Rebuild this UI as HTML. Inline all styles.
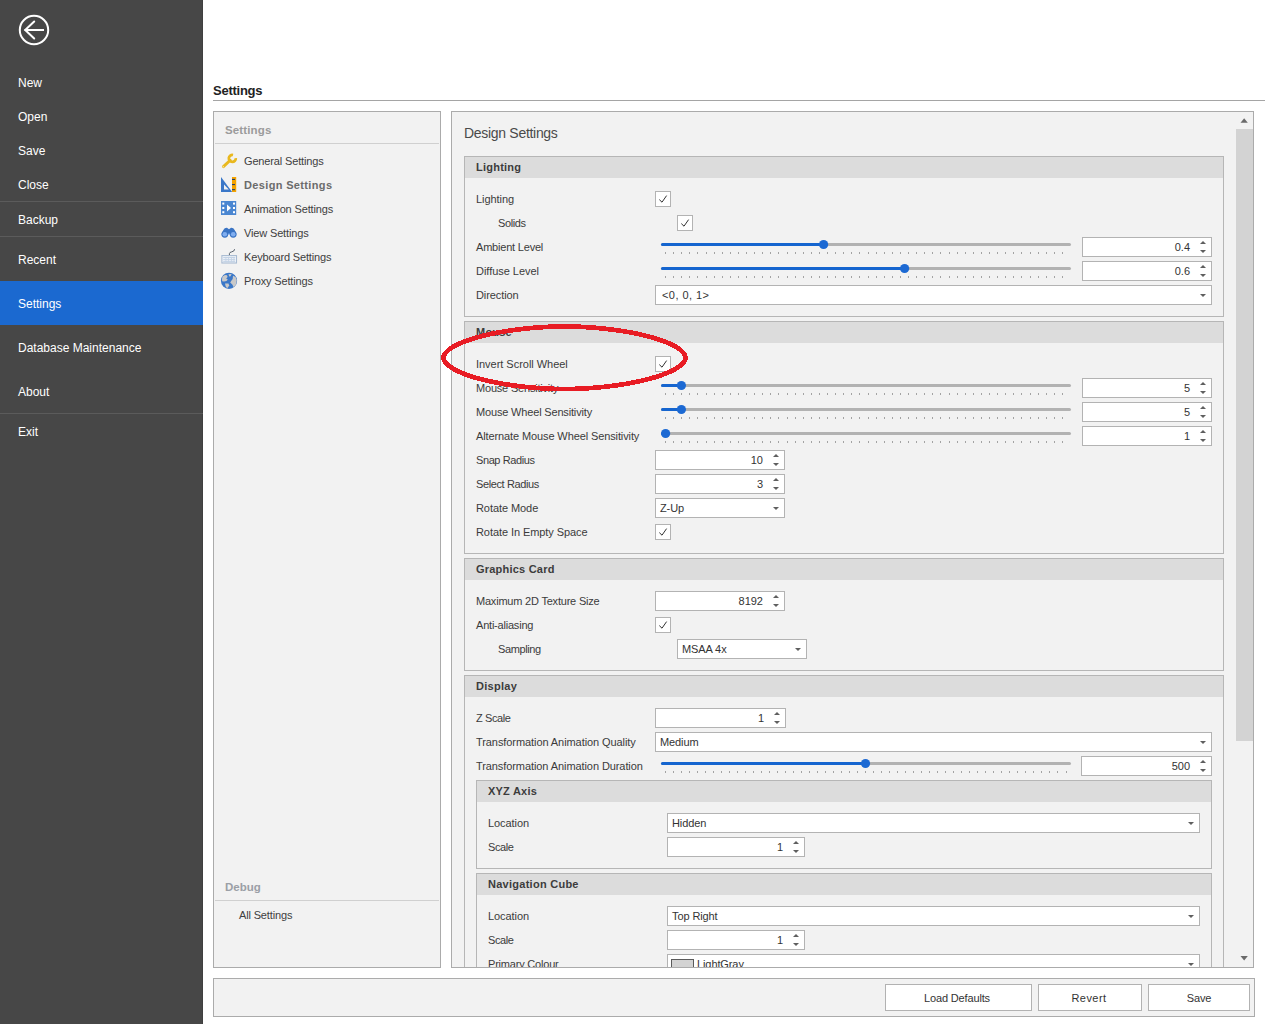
<!DOCTYPE html>
<html><head><meta charset="utf-8"><title>Settings</title>
<style>
html,body{margin:0;padding:0;width:1265px;height:1024px;overflow:hidden;background:#ffffff;}
body{position:relative;font-family:"Liberation Sans", sans-serif;}
.r{position:absolute;box-sizing:border-box;}
.t{position:absolute;white-space:nowrap;line-height:16px;font-family:"Liberation Sans", sans-serif;}
svg{display:block;}
</style></head><body>
<div class="r" style="left:0px;top:0px;width:203px;height:1024px;background:#474747;"></div>
<div class="r" style="left:202px;top:0px;width:1px;height:1024px;background:#3f3f3f;"></div>
<svg class="r" style="left:0;top:0" width="60" height="60" viewBox="0 0 60 60">
<circle cx="34" cy="30" r="14.2" fill="none" stroke="#fff" stroke-width="2"/>
<path d="M24.6 30 H44" stroke="#fff" stroke-width="2" fill="none"/>
<path d="M34.2 21.5 L25.2 30 L34.2 38.5" stroke="#fff" stroke-width="2" fill="none" stroke-linecap="round"/>
</svg>
<div class="r" style="left:0px;top:201px;width:203px;height:1px;background:#5b5b5b;"></div>
<div class="r" style="left:0px;top:236px;width:203px;height:1px;background:#5b5b5b;"></div>
<div class="r" style="left:0px;top:413px;width:203px;height:1px;background:#5b5b5b;"></div>
<div class="r" style="left:0px;top:281px;width:203px;height:44px;background:#1b69d0;"></div>
<div class="t" style="left:18px;top:75px;font-size:12px;font-weight:400;color:#ffffff;">New</div>
<div class="t" style="left:18px;top:109px;font-size:12px;font-weight:400;color:#ffffff;">Open</div>
<div class="t" style="left:18px;top:143px;font-size:12px;font-weight:400;color:#ffffff;">Save</div>
<div class="t" style="left:18px;top:177px;font-size:12px;font-weight:400;color:#ffffff;">Close</div>
<div class="t" style="left:18px;top:212px;font-size:12px;font-weight:400;color:#ffffff;">Backup</div>
<div class="t" style="left:18px;top:252px;font-size:12px;font-weight:400;color:#ffffff;">Recent</div>
<div class="t" style="left:18px;top:296px;font-size:12px;font-weight:400;color:#ffffff;">Settings</div>
<div class="t" style="left:18px;top:340px;font-size:12px;font-weight:400;color:#ffffff;">Database Maintenance</div>
<div class="t" style="left:18px;top:384px;font-size:12px;font-weight:400;color:#ffffff;">About</div>
<div class="t" style="left:18px;top:424px;font-size:12px;font-weight:400;color:#ffffff;">Exit</div>
<div class="t" style="left:213px;top:83px;font-size:13px;font-weight:700;color:#222222;letter-spacing:-0.25px;">Settings</div>
<div class="r" style="left:213px;top:100px;width:1052px;height:1px;background:#a5a5a5;"></div>
<div class="r" style="left:213px;top:111px;width:228px;height:857px;background:#f2f2f2;box-shadow:inset 0 0 0 1px #ababab;"></div>
<div class="t" style="left:225px;top:122px;font-size:11.5px;font-weight:700;color:#9b9b9b;letter-spacing:0.13px;">Settings</div>
<div class="r" style="left:215px;top:143px;width:224px;height:1px;background:#d0d0d0;"></div>
<div class="t" style="left:244px;top:153px;font-size:11px;font-weight:400;color:#404040;letter-spacing:-0.15px;">General Settings</div>
<div class="t" style="left:244px;top:177px;font-size:11px;font-weight:700;color:#6b6b6b;letter-spacing:0.35px;">Design Settings</div>
<div class="t" style="left:244px;top:201px;font-size:11px;font-weight:400;color:#404040;letter-spacing:-0.15px;">Animation Settings</div>
<div class="t" style="left:244px;top:225px;font-size:11px;font-weight:400;color:#404040;letter-spacing:-0.15px;">View Settings</div>
<div class="t" style="left:244px;top:249px;font-size:11px;font-weight:400;color:#404040;letter-spacing:-0.15px;">Keyboard Settings</div>
<div class="t" style="left:244px;top:273px;font-size:11px;font-weight:400;color:#404040;letter-spacing:-0.15px;">Proxy Settings</div>
<svg class="r" style="left:219px;top:150px" width="22" height="142" viewBox="219 150 22 142">
<!-- wrench -->
<path d="M235.79 158.09 A3.5 3.5 0 1 1 233.03 154.98" stroke="#e9b81e" stroke-width="2.7" fill="none"/>
<line x1="230.2" y1="160.2" x2="223.4" y2="166.6" stroke="#e9b81e" stroke-width="2.9" stroke-linecap="round"/>
<circle cx="223.3" cy="166.7" r="0.75" fill="#f6e2a0"/>
<!-- design: triangle + ruler -->
<path d="M221 177 L232.2 192 L221 192 Z" fill="#3a77c8"/>
<path d="M224 184.6 L228.8 189.6 L224 189.6 Z" fill="#f2f2f2"/>
<rect x="232" y="177" width="4.2" height="15" fill="#f5a300"/>
<g fill="#23406b"><rect x="232" y="178.9" width="3" height="1.1"/><rect x="232" y="184" width="3" height="1.1"/><rect x="232" y="189.1" width="3" height="1.1"/></g>
<!-- animation -->
<rect x="221" y="201" width="15.2" height="14" fill="#4a86d1"/>
<g fill="#fff"><rect x="222.3" y="202.6" width="2" height="2"/><rect x="222.3" y="207" width="2" height="2"/><rect x="222.3" y="211.2" width="2" height="2"/>
<rect x="233" y="202.6" width="2" height="2"/><rect x="233" y="207" width="2" height="2"/><rect x="233" y="211.2" width="2" height="2"/>
<path d="M227 204.5 L231 208 L227 211.5 Z"/></g>
<!-- binoculars -->
<path d="M223.2 230.2 Q224.6 227.6 227 227.8 L229 229.2 L231 227.8 Q233.4 227.6 234.8 230.2 L236.4 234 L221.6 234 Z" fill="#3a74c4"/>
<circle cx="224.8" cy="234.3" r="3.4" fill="#3a74c4"/><circle cx="233.2" cy="234.3" r="3.4" fill="#3a74c4"/>
<circle cx="224.8" cy="234.3" r="2.3" fill="#80aef0"/><circle cx="233.2" cy="234.3" r="2.3" fill="#80aef0"/>
<rect x="228" y="233.6" width="2" height="1.1" fill="#80aef0"/>
<!-- keyboard -->
<path d="M229.4 255 L229.4 253.6 Q229.6 252.2 231.6 251.9 Q234.4 251.5 234.6 249.2" stroke="#56606c" stroke-width="1" fill="none"/>
<rect x="221.9" y="255.6" width="14.6" height="7.4" fill="#f4f7fb" stroke="#a8bbd2" stroke-width="1.1"/>
<g fill="#c3d2e5"><rect x="223.2" y="257" width="12" height="1.2"/><rect x="223.2" y="259.1" width="12" height="1.2"/><rect x="223.2" y="261.1" width="12" height="1"/>
<rect x="225.5" y="256.8" width="0.8" height="5.4"/><rect x="228.2" y="256.8" width="0.8" height="5.4"/><rect x="231" y="256.8" width="0.8" height="5.4"/><rect x="233.6" y="256.8" width="0.8" height="5.4"/></g>
<!-- globe -->
<circle cx="229" cy="280.8" r="8.1" fill="#3b78c8"/>
<g fill="#c9c9c9">
<path d="M222 279 L222.5 276.5 L225 275 L227 275.3 L227.6 277 L226.2 278.4 L227.8 279.5 L226.5 281 L224 281.6 L222.2 281.2 Z"/>
<path d="M228.5 274.2 L231.6 273.9 L230.6 276.3 L229.3 276.6 Z"/>
<path d="M225 283.4 L228.5 283.4 L229.2 285.4 L227.6 288 L226 287.2 L225.4 285.2 Z"/>
<path d="M233 275.8 L235.6 277 L236.8 280 L236.2 284 L233.8 287.6 L232.3 284.6 L230.2 282.6 L231.5 280.4 L232.7 279 Z"/>
</g>
</svg>
<div class="t" style="left:225px;top:879px;font-size:11.5px;font-weight:700;color:#9b9fa6;letter-spacing:0px;">Debug</div>
<div class="r" style="left:215px;top:900px;width:224px;height:1px;background:#d0d0d0;"></div>
<div class="t" style="left:239px;top:907px;font-size:11px;font-weight:400;color:#404040;letter-spacing:-0.15px;">All Settings</div>
<div class="r" style="left:213px;top:978px;width:1042px;height:39px;background:#f2f2f2;box-shadow:inset 0 0 0 1px #ababab;"></div>
<div class="r" style="left:885px;top:984px;width:147px;height:27px;background:#ffffff;box-shadow:inset 0 0 0 1px #b2b2b2;"></div>
<div class="t" style="left:883.5px;width:147.0px;top:990px;font-size:11px;color:#333333;letter-spacing:-0.15px;text-align:center">Load Defaults</div>
<div class="r" style="left:1038px;top:984px;width:104px;height:27px;background:#ffffff;box-shadow:inset 0 0 0 1px #b2b2b2;"></div>
<div class="t" style="left:1037px;width:104px;top:990px;font-size:11px;color:#333333;letter-spacing:0.45px;text-align:center">Revert</div>
<div class="r" style="left:1148px;top:984px;width:102px;height:27px;background:#ffffff;box-shadow:inset 0 0 0 1px #b2b2b2;"></div>
<div class="t" style="left:1148px;width:102px;top:990px;font-size:11px;color:#333333;letter-spacing:-0.15px;text-align:center">Save</div>
<div class="r" style="left:451px;top:111px;width:803px;height:857px;background:#f2f2f2;box-shadow:inset 0 0 0 1px #ababab;"></div>
<div class="r" style="left:0;top:0;width:1265px;height:1024px;clip-path:inset(112px 12px 57px 452px)">
<div class="t" style="left:464px;top:125px;font-size:14px;font-weight:400;color:#4a4a4a;letter-spacing:-0.3px;">Design Settings</div>
<div class="r" style="left:464px;top:156px;width:760px;height:161px;background:#f2f2f2;box-shadow:inset 0 0 0 1px #b6b6b6;"></div>
<div class="r" style="left:465px;top:157px;width:758px;height:21px;background:#dcdcdc;"></div>
<div class="t" style="left:476px;top:159px;font-size:11px;font-weight:700;color:#3c3c3c;letter-spacing:0.229px;">Lighting</div>
<div class="t" style="left:476px;top:191px;font-size:11px;font-weight:400;color:#3b3b3b;letter-spacing:-0.057px;">Lighting</div>
<div class="r" style="left:655px;top:191px;width:16px;height:16px;background:#ffffff;box-shadow:inset 0 0 0 1px #b3b3b3;"></div>
<div class="t" style="left:498px;top:215px;font-size:11px;font-weight:400;color:#3b3b3b;letter-spacing:-0.4px;">Solids</div>
<div class="r" style="left:677px;top:215px;width:16px;height:16px;background:#ffffff;box-shadow:inset 0 0 0 1px #b3b3b3;"></div>
<div class="t" style="left:476px;top:239px;font-size:11px;font-weight:400;color:#3b3b3b;letter-spacing:-0.2px;">Ambient Level</div>
<div class="r" style="left:1082px;top:237px;width:130px;height:20px;background:#ffffff;box-shadow:inset 0 0 0 1px #b3b3b3;"></div>
<div class="t" style="right:75px;top:239px;font-size:11px;font-weight:400;color:#333333;text-align:right">0.4</div>
<div class="t" style="left:476px;top:263px;font-size:11px;font-weight:400;color:#3b3b3b;letter-spacing:-0.033px;">Diffuse Level</div>
<div class="r" style="left:1082px;top:261px;width:130px;height:20px;background:#ffffff;box-shadow:inset 0 0 0 1px #b3b3b3;"></div>
<div class="t" style="right:75px;top:263px;font-size:11px;font-weight:400;color:#333333;text-align:right">0.6</div>
<div class="t" style="left:476px;top:287px;font-size:11px;font-weight:400;color:#3b3b3b;letter-spacing:-0.088px;">Direction</div>
<div class="r" style="left:655px;top:285px;width:557px;height:20px;background:#ffffff;box-shadow:inset 0 0 0 1px #b3b3b3;"></div>
<div class="t" style="left:662px;top:287px;font-size:11px;font-weight:400;color:#333333;letter-spacing:0.45px;">&lt;0, 0, 1&gt;</div>
<div class="r" style="left:464px;top:321px;width:760px;height:233px;background:#f2f2f2;box-shadow:inset 0 0 0 1px #b6b6b6;"></div>
<div class="r" style="left:465px;top:322px;width:758px;height:21px;background:#dcdcdc;"></div>
<div class="t" style="left:476px;top:324px;font-size:11px;font-weight:700;color:#3c3c3c;letter-spacing:0.22px;">Mouse</div>
<div class="t" style="left:476px;top:356px;font-size:11px;font-weight:400;color:#3b3b3b;letter-spacing:-0.028px;">Invert Scroll Wheel</div>
<div class="r" style="left:655px;top:356px;width:16px;height:16px;background:#ffffff;box-shadow:inset 0 0 0 1px #b3b3b3;"></div>
<div class="t" style="left:476px;top:380px;font-size:11px;font-weight:400;color:#3b3b3b;letter-spacing:-0.194px;">Mouse Sensitivity</div>
<div class="r" style="left:1082px;top:378px;width:130px;height:20px;background:#ffffff;box-shadow:inset 0 0 0 1px #b3b3b3;"></div>
<div class="t" style="right:75px;top:380px;font-size:11px;font-weight:400;color:#333333;text-align:right">5</div>
<div class="t" style="left:476px;top:404px;font-size:11px;font-weight:400;color:#3b3b3b;letter-spacing:-0.168px;">Mouse Wheel Sensitivity</div>
<div class="r" style="left:1082px;top:402px;width:130px;height:20px;background:#ffffff;box-shadow:inset 0 0 0 1px #b3b3b3;"></div>
<div class="t" style="right:75px;top:404px;font-size:11px;font-weight:400;color:#333333;text-align:right">5</div>
<div class="t" style="left:476px;top:428px;font-size:11px;font-weight:400;color:#3b3b3b;letter-spacing:-0.112px;">Alternate Mouse Wheel Sensitivity</div>
<div class="r" style="left:1082px;top:426px;width:130px;height:20px;background:#ffffff;box-shadow:inset 0 0 0 1px #b3b3b3;"></div>
<div class="t" style="right:75px;top:428px;font-size:11px;font-weight:400;color:#333333;text-align:right">1</div>
<div class="t" style="left:476px;top:452px;font-size:11px;font-weight:400;color:#3b3b3b;letter-spacing:-0.4px;">Snap Radius</div>
<div class="r" style="left:655px;top:450px;width:130px;height:20px;background:#ffffff;box-shadow:inset 0 0 0 1px #b3b3b3;"></div>
<div class="t" style="right:502px;top:452px;font-size:11px;font-weight:400;color:#333333;text-align:right">10</div>
<div class="t" style="left:476px;top:476px;font-size:11px;font-weight:400;color:#3b3b3b;letter-spacing:-0.383px;">Select Radius</div>
<div class="r" style="left:655px;top:474px;width:130px;height:20px;background:#ffffff;box-shadow:inset 0 0 0 1px #b3b3b3;"></div>
<div class="t" style="right:502px;top:476px;font-size:11px;font-weight:400;color:#333333;text-align:right">3</div>
<div class="t" style="left:476px;top:500px;font-size:11px;font-weight:400;color:#3b3b3b;letter-spacing:-0.07px;">Rotate Mode</div>
<div class="r" style="left:655px;top:498px;width:130px;height:20px;background:#ffffff;box-shadow:inset 0 0 0 1px #b3b3b3;"></div>
<div class="t" style="left:660px;top:500px;font-size:11px;font-weight:400;color:#333333;letter-spacing:-0.1px;">Z-Up</div>
<div class="t" style="left:476px;top:524px;font-size:11px;font-weight:400;color:#3b3b3b;letter-spacing:-0.075px;">Rotate In Empty Space</div>
<div class="r" style="left:655px;top:524px;width:16px;height:16px;background:#ffffff;box-shadow:inset 0 0 0 1px #b3b3b3;"></div>
<div class="r" style="left:464px;top:558px;width:760px;height:113px;background:#f2f2f2;box-shadow:inset 0 0 0 1px #b6b6b6;"></div>
<div class="r" style="left:465px;top:559px;width:758px;height:21px;background:#dcdcdc;"></div>
<div class="t" style="left:476px;top:561px;font-size:11px;font-weight:700;color:#3c3c3c;letter-spacing:0.217px;">Graphics Card</div>
<div class="t" style="left:476px;top:593px;font-size:11px;font-weight:400;color:#3b3b3b;letter-spacing:-0.205px;">Maximum 2D Texture Size</div>
<div class="r" style="left:655px;top:591px;width:130px;height:20px;background:#ffffff;box-shadow:inset 0 0 0 1px #b3b3b3;"></div>
<div class="t" style="right:502px;top:593px;font-size:11px;font-weight:400;color:#333333;text-align:right">8192</div>
<div class="t" style="left:476px;top:617px;font-size:11px;font-weight:400;color:#3b3b3b;letter-spacing:-0.208px;">Anti-aliasing</div>
<div class="r" style="left:655px;top:617px;width:16px;height:16px;background:#ffffff;box-shadow:inset 0 0 0 1px #b3b3b3;"></div>
<div class="t" style="left:498px;top:641px;font-size:11px;font-weight:400;color:#3b3b3b;letter-spacing:-0.4px;">Sampling</div>
<div class="r" style="left:677px;top:639px;width:130px;height:20px;background:#ffffff;box-shadow:inset 0 0 0 1px #b3b3b3;"></div>
<div class="t" style="left:682px;top:641px;font-size:11px;font-weight:400;color:#333333;letter-spacing:-0.1px;">MSAA 4x</div>
<div class="r" style="left:464px;top:675px;width:760px;height:426px;background:#f2f2f2;box-shadow:inset 0 0 0 1px #b6b6b6;"></div>
<div class="r" style="left:465px;top:676px;width:758px;height:21px;background:#dcdcdc;"></div>
<div class="t" style="left:476px;top:678px;font-size:11px;font-weight:700;color:#3c3c3c;letter-spacing:0.283px;">Display</div>
<div class="t" style="left:476px;top:710px;font-size:11px;font-weight:400;color:#3b3b3b;letter-spacing:-0.4px;">Z Scale</div>
<div class="r" style="left:655px;top:708px;width:131px;height:20px;background:#ffffff;box-shadow:inset 0 0 0 1px #b3b3b3;"></div>
<div class="t" style="right:501px;top:710px;font-size:11px;font-weight:400;color:#333333;text-align:right">1</div>
<div class="t" style="left:476px;top:734px;font-size:11px;font-weight:400;color:#3b3b3b;letter-spacing:-0.077px;">Transformation Animation Quality</div>
<div class="r" style="left:655px;top:732px;width:557px;height:20px;background:#ffffff;box-shadow:inset 0 0 0 1px #b3b3b3;"></div>
<div class="t" style="left:660px;top:734px;font-size:11px;font-weight:400;color:#333333;letter-spacing:-0.1px;">Medium</div>
<div class="t" style="left:476px;top:758px;font-size:11px;font-weight:400;color:#3b3b3b;letter-spacing:-0.084px;">Transformation Animation Duration</div>
<div class="r" style="left:1081px;top:756px;width:131px;height:20px;background:#ffffff;box-shadow:inset 0 0 0 1px #b3b3b3;"></div>
<div class="t" style="right:75px;top:758px;font-size:11px;font-weight:400;color:#333333;text-align:right">500</div>
<div class="r" style="left:476px;top:780px;width:736px;height:89px;background:#f2f2f2;box-shadow:inset 0 0 0 1px #b6b6b6;"></div>
<div class="r" style="left:477px;top:781px;width:734px;height:21px;background:#dcdcdc;"></div>
<div class="t" style="left:488px;top:783px;font-size:11px;font-weight:700;color:#3c3c3c;letter-spacing:0.22px;">XYZ Axis</div>
<div class="t" style="left:488px;top:815px;font-size:11px;font-weight:400;color:#3b3b3b;letter-spacing:-0.071px;">Location</div>
<div class="r" style="left:667px;top:813px;width:533px;height:20px;background:#ffffff;box-shadow:inset 0 0 0 1px #b3b3b3;"></div>
<div class="t" style="left:672px;top:815px;font-size:11px;font-weight:400;color:#333333;letter-spacing:-0.1px;">Hidden</div>
<div class="t" style="left:488px;top:839px;font-size:11px;font-weight:400;color:#3b3b3b;letter-spacing:-0.4px;">Scale</div>
<div class="r" style="left:667px;top:837px;width:138px;height:20px;background:#ffffff;box-shadow:inset 0 0 0 1px #b3b3b3;"></div>
<div class="t" style="right:482px;top:839px;font-size:11px;font-weight:400;color:#333333;text-align:right">1</div>
<div class="r" style="left:476px;top:873px;width:736px;height:228px;background:#f2f2f2;box-shadow:inset 0 0 0 1px #b6b6b6;"></div>
<div class="r" style="left:477px;top:874px;width:734px;height:21px;background:#dcdcdc;"></div>
<div class="t" style="left:488px;top:876px;font-size:11px;font-weight:700;color:#3c3c3c;letter-spacing:0.264px;">Navigation Cube</div>
<div class="t" style="left:488px;top:908px;font-size:11px;font-weight:400;color:#3b3b3b;letter-spacing:-0.071px;">Location</div>
<div class="r" style="left:667px;top:906px;width:533px;height:20px;background:#ffffff;box-shadow:inset 0 0 0 1px #b3b3b3;"></div>
<div class="t" style="left:672px;top:908px;font-size:11px;font-weight:400;color:#333333;letter-spacing:-0.1px;">Top Right</div>
<div class="t" style="left:488px;top:932px;font-size:11px;font-weight:400;color:#3b3b3b;letter-spacing:-0.4px;">Scale</div>
<div class="r" style="left:667px;top:930px;width:138px;height:20px;background:#ffffff;box-shadow:inset 0 0 0 1px #b3b3b3;"></div>
<div class="t" style="right:482px;top:932px;font-size:11px;font-weight:400;color:#333333;text-align:right">1</div>
<div class="t" style="left:488px;top:956px;font-size:11px;font-weight:400;color:#3b3b3b;letter-spacing:-0.2px;">Primary Colour</div>
<div class="r" style="left:667px;top:954px;width:533px;height:20px;background:#ffffff;box-shadow:inset 0 0 0 1px #b3b3b3;"></div>
<div class="r" style="left:671px;top:959px;width:23px;height:13px;background:#d3d3d3;box-shadow:inset 0 0 0 1px #5a5a5a;"></div>
<div class="t" style="left:697px;top:956px;font-size:11px;font-weight:400;color:#333333;letter-spacing:-0.1px;">LightGray</div>
<svg class="r" style="left:0;top:0" width="1265" height="1024"><path d="M659.3 199.6 L662 202.2 L666.6 195.6" stroke="#333333" stroke-width="1" fill="none"/><path d="M681.3 223.6 L684 226.2 L688.6 219.6" stroke="#333333" stroke-width="1" fill="none"/><rect x="665" y="252" width="1" height="2" fill="#a3a3a3"/><rect x="673" y="252" width="1" height="2" fill="#a3a3a3"/><rect x="681" y="252" width="1" height="2" fill="#a3a3a3"/><rect x="689" y="252" width="1" height="2" fill="#a3a3a3"/><rect x="697" y="252" width="1" height="2" fill="#a3a3a3"/><rect x="706" y="252" width="1" height="2" fill="#a3a3a3"/><rect x="714" y="252" width="1" height="2" fill="#a3a3a3"/><rect x="722" y="252" width="1" height="2" fill="#a3a3a3"/><rect x="730" y="252" width="1" height="2" fill="#a3a3a3"/><rect x="738" y="252" width="1" height="2" fill="#a3a3a3"/><rect x="746" y="252" width="1" height="2" fill="#a3a3a3"/><rect x="754" y="252" width="1" height="2" fill="#a3a3a3"/><rect x="762" y="252" width="1" height="2" fill="#a3a3a3"/><rect x="770" y="252" width="1" height="2" fill="#a3a3a3"/><rect x="778" y="252" width="1" height="2" fill="#a3a3a3"/><rect x="787" y="252" width="1" height="2" fill="#a3a3a3"/><rect x="795" y="252" width="1" height="2" fill="#a3a3a3"/><rect x="803" y="252" width="1" height="2" fill="#a3a3a3"/><rect x="811" y="252" width="1" height="2" fill="#a3a3a3"/><rect x="819" y="252" width="1" height="2" fill="#a3a3a3"/><rect x="827" y="252" width="1" height="2" fill="#a3a3a3"/><rect x="835" y="252" width="1" height="2" fill="#a3a3a3"/><rect x="843" y="252" width="1" height="2" fill="#a3a3a3"/><rect x="851" y="252" width="1" height="2" fill="#a3a3a3"/><rect x="859" y="252" width="1" height="2" fill="#a3a3a3"/><rect x="868" y="252" width="1" height="2" fill="#a3a3a3"/><rect x="876" y="252" width="1" height="2" fill="#a3a3a3"/><rect x="884" y="252" width="1" height="2" fill="#a3a3a3"/><rect x="892" y="252" width="1" height="2" fill="#a3a3a3"/><rect x="900" y="252" width="1" height="2" fill="#a3a3a3"/><rect x="908" y="252" width="1" height="2" fill="#a3a3a3"/><rect x="916" y="252" width="1" height="2" fill="#a3a3a3"/><rect x="924" y="252" width="1" height="2" fill="#a3a3a3"/><rect x="932" y="252" width="1" height="2" fill="#a3a3a3"/><rect x="940" y="252" width="1" height="2" fill="#a3a3a3"/><rect x="949" y="252" width="1" height="2" fill="#a3a3a3"/><rect x="957" y="252" width="1" height="2" fill="#a3a3a3"/><rect x="965" y="252" width="1" height="2" fill="#a3a3a3"/><rect x="973" y="252" width="1" height="2" fill="#a3a3a3"/><rect x="981" y="252" width="1" height="2" fill="#a3a3a3"/><rect x="989" y="252" width="1" height="2" fill="#a3a3a3"/><rect x="997" y="252" width="1" height="2" fill="#a3a3a3"/><rect x="1005" y="252" width="1" height="2" fill="#a3a3a3"/><rect x="1013" y="252" width="1" height="2" fill="#a3a3a3"/><rect x="1021" y="252" width="1" height="2" fill="#a3a3a3"/><rect x="1030" y="252" width="1" height="2" fill="#a3a3a3"/><rect x="1038" y="252" width="1" height="2" fill="#a3a3a3"/><rect x="1046" y="252" width="1" height="2" fill="#a3a3a3"/><rect x="1054" y="252" width="1" height="2" fill="#a3a3a3"/><rect x="1062" y="252" width="1" height="2" fill="#a3a3a3"/><line x1="662.5" y1="244.5" x2="1069.5" y2="244.5" stroke="#b2b2b2" stroke-width="3" stroke-linecap="round"/><line x1="662.5" y1="244.5" x2="823.6" y2="244.5" stroke="#1565cf" stroke-width="3" stroke-linecap="round"/><circle cx="823.6" cy="244.5" r="4.6" fill="#1c69d3"/><path d="M1200 244 L1206 244 L1203 241 Z" fill="#5f5f5f"/><path d="M1200 250 L1206 250 L1203 253 Z" fill="#5f5f5f"/><rect x="665" y="276" width="1" height="2" fill="#a3a3a3"/><rect x="673" y="276" width="1" height="2" fill="#a3a3a3"/><rect x="681" y="276" width="1" height="2" fill="#a3a3a3"/><rect x="689" y="276" width="1" height="2" fill="#a3a3a3"/><rect x="697" y="276" width="1" height="2" fill="#a3a3a3"/><rect x="706" y="276" width="1" height="2" fill="#a3a3a3"/><rect x="714" y="276" width="1" height="2" fill="#a3a3a3"/><rect x="722" y="276" width="1" height="2" fill="#a3a3a3"/><rect x="730" y="276" width="1" height="2" fill="#a3a3a3"/><rect x="738" y="276" width="1" height="2" fill="#a3a3a3"/><rect x="746" y="276" width="1" height="2" fill="#a3a3a3"/><rect x="754" y="276" width="1" height="2" fill="#a3a3a3"/><rect x="762" y="276" width="1" height="2" fill="#a3a3a3"/><rect x="770" y="276" width="1" height="2" fill="#a3a3a3"/><rect x="778" y="276" width="1" height="2" fill="#a3a3a3"/><rect x="787" y="276" width="1" height="2" fill="#a3a3a3"/><rect x="795" y="276" width="1" height="2" fill="#a3a3a3"/><rect x="803" y="276" width="1" height="2" fill="#a3a3a3"/><rect x="811" y="276" width="1" height="2" fill="#a3a3a3"/><rect x="819" y="276" width="1" height="2" fill="#a3a3a3"/><rect x="827" y="276" width="1" height="2" fill="#a3a3a3"/><rect x="835" y="276" width="1" height="2" fill="#a3a3a3"/><rect x="843" y="276" width="1" height="2" fill="#a3a3a3"/><rect x="851" y="276" width="1" height="2" fill="#a3a3a3"/><rect x="859" y="276" width="1" height="2" fill="#a3a3a3"/><rect x="868" y="276" width="1" height="2" fill="#a3a3a3"/><rect x="876" y="276" width="1" height="2" fill="#a3a3a3"/><rect x="884" y="276" width="1" height="2" fill="#a3a3a3"/><rect x="892" y="276" width="1" height="2" fill="#a3a3a3"/><rect x="900" y="276" width="1" height="2" fill="#a3a3a3"/><rect x="908" y="276" width="1" height="2" fill="#a3a3a3"/><rect x="916" y="276" width="1" height="2" fill="#a3a3a3"/><rect x="924" y="276" width="1" height="2" fill="#a3a3a3"/><rect x="932" y="276" width="1" height="2" fill="#a3a3a3"/><rect x="940" y="276" width="1" height="2" fill="#a3a3a3"/><rect x="949" y="276" width="1" height="2" fill="#a3a3a3"/><rect x="957" y="276" width="1" height="2" fill="#a3a3a3"/><rect x="965" y="276" width="1" height="2" fill="#a3a3a3"/><rect x="973" y="276" width="1" height="2" fill="#a3a3a3"/><rect x="981" y="276" width="1" height="2" fill="#a3a3a3"/><rect x="989" y="276" width="1" height="2" fill="#a3a3a3"/><rect x="997" y="276" width="1" height="2" fill="#a3a3a3"/><rect x="1005" y="276" width="1" height="2" fill="#a3a3a3"/><rect x="1013" y="276" width="1" height="2" fill="#a3a3a3"/><rect x="1021" y="276" width="1" height="2" fill="#a3a3a3"/><rect x="1030" y="276" width="1" height="2" fill="#a3a3a3"/><rect x="1038" y="276" width="1" height="2" fill="#a3a3a3"/><rect x="1046" y="276" width="1" height="2" fill="#a3a3a3"/><rect x="1054" y="276" width="1" height="2" fill="#a3a3a3"/><rect x="1062" y="276" width="1" height="2" fill="#a3a3a3"/><line x1="662.5" y1="268.5" x2="1069.5" y2="268.5" stroke="#b2b2b2" stroke-width="3" stroke-linecap="round"/><line x1="662.5" y1="268.5" x2="904.6" y2="268.5" stroke="#1565cf" stroke-width="3" stroke-linecap="round"/><circle cx="904.6" cy="268.5" r="4.6" fill="#1c69d3"/><path d="M1200 268 L1206 268 L1203 265 Z" fill="#5f5f5f"/><path d="M1200 274 L1206 274 L1203 277 Z" fill="#5f5f5f"/><path d="M1200 294 L1206 294 L1203 297 Z" fill="#5f5f5f"/><path d="M659.3 364.6 L662 367.2 L666.6 360.6" stroke="#333333" stroke-width="1" fill="none"/><rect x="665" y="393" width="1" height="2" fill="#a3a3a3"/><rect x="673" y="393" width="1" height="2" fill="#a3a3a3"/><rect x="681" y="393" width="1" height="2" fill="#a3a3a3"/><rect x="689" y="393" width="1" height="2" fill="#a3a3a3"/><rect x="697" y="393" width="1" height="2" fill="#a3a3a3"/><rect x="706" y="393" width="1" height="2" fill="#a3a3a3"/><rect x="714" y="393" width="1" height="2" fill="#a3a3a3"/><rect x="722" y="393" width="1" height="2" fill="#a3a3a3"/><rect x="730" y="393" width="1" height="2" fill="#a3a3a3"/><rect x="738" y="393" width="1" height="2" fill="#a3a3a3"/><rect x="746" y="393" width="1" height="2" fill="#a3a3a3"/><rect x="754" y="393" width="1" height="2" fill="#a3a3a3"/><rect x="762" y="393" width="1" height="2" fill="#a3a3a3"/><rect x="770" y="393" width="1" height="2" fill="#a3a3a3"/><rect x="778" y="393" width="1" height="2" fill="#a3a3a3"/><rect x="787" y="393" width="1" height="2" fill="#a3a3a3"/><rect x="795" y="393" width="1" height="2" fill="#a3a3a3"/><rect x="803" y="393" width="1" height="2" fill="#a3a3a3"/><rect x="811" y="393" width="1" height="2" fill="#a3a3a3"/><rect x="819" y="393" width="1" height="2" fill="#a3a3a3"/><rect x="827" y="393" width="1" height="2" fill="#a3a3a3"/><rect x="835" y="393" width="1" height="2" fill="#a3a3a3"/><rect x="843" y="393" width="1" height="2" fill="#a3a3a3"/><rect x="851" y="393" width="1" height="2" fill="#a3a3a3"/><rect x="859" y="393" width="1" height="2" fill="#a3a3a3"/><rect x="868" y="393" width="1" height="2" fill="#a3a3a3"/><rect x="876" y="393" width="1" height="2" fill="#a3a3a3"/><rect x="884" y="393" width="1" height="2" fill="#a3a3a3"/><rect x="892" y="393" width="1" height="2" fill="#a3a3a3"/><rect x="900" y="393" width="1" height="2" fill="#a3a3a3"/><rect x="908" y="393" width="1" height="2" fill="#a3a3a3"/><rect x="916" y="393" width="1" height="2" fill="#a3a3a3"/><rect x="924" y="393" width="1" height="2" fill="#a3a3a3"/><rect x="932" y="393" width="1" height="2" fill="#a3a3a3"/><rect x="940" y="393" width="1" height="2" fill="#a3a3a3"/><rect x="949" y="393" width="1" height="2" fill="#a3a3a3"/><rect x="957" y="393" width="1" height="2" fill="#a3a3a3"/><rect x="965" y="393" width="1" height="2" fill="#a3a3a3"/><rect x="973" y="393" width="1" height="2" fill="#a3a3a3"/><rect x="981" y="393" width="1" height="2" fill="#a3a3a3"/><rect x="989" y="393" width="1" height="2" fill="#a3a3a3"/><rect x="997" y="393" width="1" height="2" fill="#a3a3a3"/><rect x="1005" y="393" width="1" height="2" fill="#a3a3a3"/><rect x="1013" y="393" width="1" height="2" fill="#a3a3a3"/><rect x="1021" y="393" width="1" height="2" fill="#a3a3a3"/><rect x="1030" y="393" width="1" height="2" fill="#a3a3a3"/><rect x="1038" y="393" width="1" height="2" fill="#a3a3a3"/><rect x="1046" y="393" width="1" height="2" fill="#a3a3a3"/><rect x="1054" y="393" width="1" height="2" fill="#a3a3a3"/><rect x="1062" y="393" width="1" height="2" fill="#a3a3a3"/><line x1="662.5" y1="385.5" x2="1069.5" y2="385.5" stroke="#b2b2b2" stroke-width="3" stroke-linecap="round"/><line x1="662.5" y1="385.5" x2="681.4" y2="385.5" stroke="#1565cf" stroke-width="3" stroke-linecap="round"/><circle cx="681.4" cy="385.5" r="4.6" fill="#1c69d3"/><path d="M1200 385 L1206 385 L1203 382 Z" fill="#5f5f5f"/><path d="M1200 391 L1206 391 L1203 394 Z" fill="#5f5f5f"/><rect x="665" y="417" width="1" height="2" fill="#a3a3a3"/><rect x="673" y="417" width="1" height="2" fill="#a3a3a3"/><rect x="681" y="417" width="1" height="2" fill="#a3a3a3"/><rect x="689" y="417" width="1" height="2" fill="#a3a3a3"/><rect x="697" y="417" width="1" height="2" fill="#a3a3a3"/><rect x="706" y="417" width="1" height="2" fill="#a3a3a3"/><rect x="714" y="417" width="1" height="2" fill="#a3a3a3"/><rect x="722" y="417" width="1" height="2" fill="#a3a3a3"/><rect x="730" y="417" width="1" height="2" fill="#a3a3a3"/><rect x="738" y="417" width="1" height="2" fill="#a3a3a3"/><rect x="746" y="417" width="1" height="2" fill="#a3a3a3"/><rect x="754" y="417" width="1" height="2" fill="#a3a3a3"/><rect x="762" y="417" width="1" height="2" fill="#a3a3a3"/><rect x="770" y="417" width="1" height="2" fill="#a3a3a3"/><rect x="778" y="417" width="1" height="2" fill="#a3a3a3"/><rect x="787" y="417" width="1" height="2" fill="#a3a3a3"/><rect x="795" y="417" width="1" height="2" fill="#a3a3a3"/><rect x="803" y="417" width="1" height="2" fill="#a3a3a3"/><rect x="811" y="417" width="1" height="2" fill="#a3a3a3"/><rect x="819" y="417" width="1" height="2" fill="#a3a3a3"/><rect x="827" y="417" width="1" height="2" fill="#a3a3a3"/><rect x="835" y="417" width="1" height="2" fill="#a3a3a3"/><rect x="843" y="417" width="1" height="2" fill="#a3a3a3"/><rect x="851" y="417" width="1" height="2" fill="#a3a3a3"/><rect x="859" y="417" width="1" height="2" fill="#a3a3a3"/><rect x="868" y="417" width="1" height="2" fill="#a3a3a3"/><rect x="876" y="417" width="1" height="2" fill="#a3a3a3"/><rect x="884" y="417" width="1" height="2" fill="#a3a3a3"/><rect x="892" y="417" width="1" height="2" fill="#a3a3a3"/><rect x="900" y="417" width="1" height="2" fill="#a3a3a3"/><rect x="908" y="417" width="1" height="2" fill="#a3a3a3"/><rect x="916" y="417" width="1" height="2" fill="#a3a3a3"/><rect x="924" y="417" width="1" height="2" fill="#a3a3a3"/><rect x="932" y="417" width="1" height="2" fill="#a3a3a3"/><rect x="940" y="417" width="1" height="2" fill="#a3a3a3"/><rect x="949" y="417" width="1" height="2" fill="#a3a3a3"/><rect x="957" y="417" width="1" height="2" fill="#a3a3a3"/><rect x="965" y="417" width="1" height="2" fill="#a3a3a3"/><rect x="973" y="417" width="1" height="2" fill="#a3a3a3"/><rect x="981" y="417" width="1" height="2" fill="#a3a3a3"/><rect x="989" y="417" width="1" height="2" fill="#a3a3a3"/><rect x="997" y="417" width="1" height="2" fill="#a3a3a3"/><rect x="1005" y="417" width="1" height="2" fill="#a3a3a3"/><rect x="1013" y="417" width="1" height="2" fill="#a3a3a3"/><rect x="1021" y="417" width="1" height="2" fill="#a3a3a3"/><rect x="1030" y="417" width="1" height="2" fill="#a3a3a3"/><rect x="1038" y="417" width="1" height="2" fill="#a3a3a3"/><rect x="1046" y="417" width="1" height="2" fill="#a3a3a3"/><rect x="1054" y="417" width="1" height="2" fill="#a3a3a3"/><rect x="1062" y="417" width="1" height="2" fill="#a3a3a3"/><line x1="662.5" y1="409.5" x2="1069.5" y2="409.5" stroke="#b2b2b2" stroke-width="3" stroke-linecap="round"/><line x1="662.5" y1="409.5" x2="681.4" y2="409.5" stroke="#1565cf" stroke-width="3" stroke-linecap="round"/><circle cx="681.4" cy="409.5" r="4.6" fill="#1c69d3"/><path d="M1200 409 L1206 409 L1203 406 Z" fill="#5f5f5f"/><path d="M1200 415 L1206 415 L1203 418 Z" fill="#5f5f5f"/><rect x="665" y="441" width="1" height="2" fill="#a3a3a3"/><rect x="673" y="441" width="1" height="2" fill="#a3a3a3"/><rect x="681" y="441" width="1" height="2" fill="#a3a3a3"/><rect x="689" y="441" width="1" height="2" fill="#a3a3a3"/><rect x="697" y="441" width="1" height="2" fill="#a3a3a3"/><rect x="706" y="441" width="1" height="2" fill="#a3a3a3"/><rect x="714" y="441" width="1" height="2" fill="#a3a3a3"/><rect x="722" y="441" width="1" height="2" fill="#a3a3a3"/><rect x="730" y="441" width="1" height="2" fill="#a3a3a3"/><rect x="738" y="441" width="1" height="2" fill="#a3a3a3"/><rect x="746" y="441" width="1" height="2" fill="#a3a3a3"/><rect x="754" y="441" width="1" height="2" fill="#a3a3a3"/><rect x="762" y="441" width="1" height="2" fill="#a3a3a3"/><rect x="770" y="441" width="1" height="2" fill="#a3a3a3"/><rect x="778" y="441" width="1" height="2" fill="#a3a3a3"/><rect x="787" y="441" width="1" height="2" fill="#a3a3a3"/><rect x="795" y="441" width="1" height="2" fill="#a3a3a3"/><rect x="803" y="441" width="1" height="2" fill="#a3a3a3"/><rect x="811" y="441" width="1" height="2" fill="#a3a3a3"/><rect x="819" y="441" width="1" height="2" fill="#a3a3a3"/><rect x="827" y="441" width="1" height="2" fill="#a3a3a3"/><rect x="835" y="441" width="1" height="2" fill="#a3a3a3"/><rect x="843" y="441" width="1" height="2" fill="#a3a3a3"/><rect x="851" y="441" width="1" height="2" fill="#a3a3a3"/><rect x="859" y="441" width="1" height="2" fill="#a3a3a3"/><rect x="868" y="441" width="1" height="2" fill="#a3a3a3"/><rect x="876" y="441" width="1" height="2" fill="#a3a3a3"/><rect x="884" y="441" width="1" height="2" fill="#a3a3a3"/><rect x="892" y="441" width="1" height="2" fill="#a3a3a3"/><rect x="900" y="441" width="1" height="2" fill="#a3a3a3"/><rect x="908" y="441" width="1" height="2" fill="#a3a3a3"/><rect x="916" y="441" width="1" height="2" fill="#a3a3a3"/><rect x="924" y="441" width="1" height="2" fill="#a3a3a3"/><rect x="932" y="441" width="1" height="2" fill="#a3a3a3"/><rect x="940" y="441" width="1" height="2" fill="#a3a3a3"/><rect x="949" y="441" width="1" height="2" fill="#a3a3a3"/><rect x="957" y="441" width="1" height="2" fill="#a3a3a3"/><rect x="965" y="441" width="1" height="2" fill="#a3a3a3"/><rect x="973" y="441" width="1" height="2" fill="#a3a3a3"/><rect x="981" y="441" width="1" height="2" fill="#a3a3a3"/><rect x="989" y="441" width="1" height="2" fill="#a3a3a3"/><rect x="997" y="441" width="1" height="2" fill="#a3a3a3"/><rect x="1005" y="441" width="1" height="2" fill="#a3a3a3"/><rect x="1013" y="441" width="1" height="2" fill="#a3a3a3"/><rect x="1021" y="441" width="1" height="2" fill="#a3a3a3"/><rect x="1030" y="441" width="1" height="2" fill="#a3a3a3"/><rect x="1038" y="441" width="1" height="2" fill="#a3a3a3"/><rect x="1046" y="441" width="1" height="2" fill="#a3a3a3"/><rect x="1054" y="441" width="1" height="2" fill="#a3a3a3"/><rect x="1062" y="441" width="1" height="2" fill="#a3a3a3"/><line x1="662.5" y1="433.5" x2="1069.5" y2="433.5" stroke="#b2b2b2" stroke-width="3" stroke-linecap="round"/><line x1="662.5" y1="433.5" x2="665.6" y2="433.5" stroke="#1565cf" stroke-width="3" stroke-linecap="round"/><circle cx="665.6" cy="433.5" r="4.6" fill="#1c69d3"/><path d="M1200 433 L1206 433 L1203 430 Z" fill="#5f5f5f"/><path d="M1200 439 L1206 439 L1203 442 Z" fill="#5f5f5f"/><path d="M773 457 L779 457 L776 454 Z" fill="#5f5f5f"/><path d="M773 463 L779 463 L776 466 Z" fill="#5f5f5f"/><path d="M773 481 L779 481 L776 478 Z" fill="#5f5f5f"/><path d="M773 487 L779 487 L776 490 Z" fill="#5f5f5f"/><path d="M773 507 L779 507 L776 510 Z" fill="#5f5f5f"/><path d="M659.3 532.6 L662 535.2 L666.6 528.6" stroke="#333333" stroke-width="1" fill="none"/><path d="M773 598 L779 598 L776 595 Z" fill="#5f5f5f"/><path d="M773 604 L779 604 L776 607 Z" fill="#5f5f5f"/><path d="M659.3 625.6 L662 628.2 L666.6 621.6" stroke="#333333" stroke-width="1" fill="none"/><path d="M795 648 L801 648 L798 651 Z" fill="#5f5f5f"/><path d="M774 715 L780 715 L777 712 Z" fill="#5f5f5f"/><path d="M774 721 L780 721 L777 724 Z" fill="#5f5f5f"/><path d="M1200 741 L1206 741 L1203 744 Z" fill="#5f5f5f"/><rect x="665" y="771" width="1" height="2" fill="#a3a3a3"/><rect x="673" y="771" width="1" height="2" fill="#a3a3a3"/><rect x="681" y="771" width="1" height="2" fill="#a3a3a3"/><rect x="689" y="771" width="1" height="2" fill="#a3a3a3"/><rect x="697" y="771" width="1" height="2" fill="#a3a3a3"/><rect x="705" y="771" width="1" height="2" fill="#a3a3a3"/><rect x="713" y="771" width="1" height="2" fill="#a3a3a3"/><rect x="721" y="771" width="1" height="2" fill="#a3a3a3"/><rect x="729" y="771" width="1" height="2" fill="#a3a3a3"/><rect x="737" y="771" width="1" height="2" fill="#a3a3a3"/><rect x="745" y="771" width="1" height="2" fill="#a3a3a3"/><rect x="753" y="771" width="1" height="2" fill="#a3a3a3"/><rect x="761" y="771" width="1" height="2" fill="#a3a3a3"/><rect x="769" y="771" width="1" height="2" fill="#a3a3a3"/><rect x="777" y="771" width="1" height="2" fill="#a3a3a3"/><rect x="785" y="771" width="1" height="2" fill="#a3a3a3"/><rect x="793" y="771" width="1" height="2" fill="#a3a3a3"/><rect x="801" y="771" width="1" height="2" fill="#a3a3a3"/><rect x="809" y="771" width="1" height="2" fill="#a3a3a3"/><rect x="817" y="771" width="1" height="2" fill="#a3a3a3"/><rect x="825" y="771" width="1" height="2" fill="#a3a3a3"/><rect x="833" y="771" width="1" height="2" fill="#a3a3a3"/><rect x="841" y="771" width="1" height="2" fill="#a3a3a3"/><rect x="849" y="771" width="1" height="2" fill="#a3a3a3"/><rect x="857" y="771" width="1" height="2" fill="#a3a3a3"/><rect x="865" y="771" width="1" height="2" fill="#a3a3a3"/><rect x="873" y="771" width="1" height="2" fill="#a3a3a3"/><rect x="881" y="771" width="1" height="2" fill="#a3a3a3"/><rect x="889" y="771" width="1" height="2" fill="#a3a3a3"/><rect x="897" y="771" width="1" height="2" fill="#a3a3a3"/><rect x="905" y="771" width="1" height="2" fill="#a3a3a3"/><rect x="913" y="771" width="1" height="2" fill="#a3a3a3"/><rect x="921" y="771" width="1" height="2" fill="#a3a3a3"/><rect x="929" y="771" width="1" height="2" fill="#a3a3a3"/><rect x="937" y="771" width="1" height="2" fill="#a3a3a3"/><rect x="945" y="771" width="1" height="2" fill="#a3a3a3"/><rect x="953" y="771" width="1" height="2" fill="#a3a3a3"/><rect x="961" y="771" width="1" height="2" fill="#a3a3a3"/><rect x="969" y="771" width="1" height="2" fill="#a3a3a3"/><rect x="977" y="771" width="1" height="2" fill="#a3a3a3"/><rect x="985" y="771" width="1" height="2" fill="#a3a3a3"/><rect x="993" y="771" width="1" height="2" fill="#a3a3a3"/><rect x="1001" y="771" width="1" height="2" fill="#a3a3a3"/><rect x="1009" y="771" width="1" height="2" fill="#a3a3a3"/><rect x="1017" y="771" width="1" height="2" fill="#a3a3a3"/><rect x="1025" y="771" width="1" height="2" fill="#a3a3a3"/><rect x="1033" y="771" width="1" height="2" fill="#a3a3a3"/><rect x="1041" y="771" width="1" height="2" fill="#a3a3a3"/><rect x="1049" y="771" width="1" height="2" fill="#a3a3a3"/><rect x="1057" y="771" width="1" height="2" fill="#a3a3a3"/><rect x="1066" y="771" width="1" height="2" fill="#a3a3a3"/><line x1="662.5" y1="763.5" x2="1069.5" y2="763.5" stroke="#b2b2b2" stroke-width="3" stroke-linecap="round"/><line x1="662.5" y1="763.5" x2="865.5" y2="763.5" stroke="#1565cf" stroke-width="3" stroke-linecap="round"/><circle cx="865.5" cy="763.5" r="4.6" fill="#1c69d3"/><path d="M1200 763 L1206 763 L1203 760 Z" fill="#5f5f5f"/><path d="M1200 769 L1206 769 L1203 772 Z" fill="#5f5f5f"/><path d="M1188 822 L1194 822 L1191 825 Z" fill="#5f5f5f"/><path d="M793 844 L799 844 L796 841 Z" fill="#5f5f5f"/><path d="M793 850 L799 850 L796 853 Z" fill="#5f5f5f"/><path d="M1188 915 L1194 915 L1191 918 Z" fill="#5f5f5f"/><path d="M793 937 L799 937 L796 934 Z" fill="#5f5f5f"/><path d="M793 943 L799 943 L796 946 Z" fill="#5f5f5f"/><path d="M1188 963 L1194 963 L1191 966 Z" fill="#5f5f5f"/></svg>
</div>
<div class="r" style="left:1236px;top:129px;width:17px;height:612px;background:#d3d3d3;"></div>
<svg class="r" style="left:0;top:0" width="1265" height="1024"><path d="M1240.5 122.8 L1247.8 122.8 L1244.15 118.3 Z" fill="#6a6a6a"/><path d="M1240.5 956 L1247.8 956 L1244.15 960.6 Z" fill="#6a6a6a"/></svg>
<svg class="r" style="left:0;top:0" width="1265" height="1024"><path d="M685.50 357.75 L685.48 358.14 L685.42 358.58 L685.32 359.04 L685.18 359.51 L685.00 359.99 L684.78 360.47 L684.53 360.97 L684.23 361.46 L683.89 361.96 L683.51 362.47 L683.10 362.97 L682.64 363.48 L682.15 363.99 L681.62 364.50 L681.05 365.01 L680.44 365.52 L679.79 366.03 L679.11 366.54 L678.39 367.05 L677.63 367.56 L676.84 368.07 L676.00 368.58 L675.14 369.08 L674.23 369.59 L673.29 370.09 L672.32 370.58 L671.31 371.08 L670.26 371.57 L669.19 372.06 L668.07 372.54 L666.93 373.03 L665.75 373.50 L664.54 373.98 L663.30 374.45 L662.03 374.91 L660.72 375.37 L659.39 375.83 L658.03 376.28 L656.63 376.72 L655.21 377.16 L653.76 377.59 L652.28 378.02 L650.78 378.44 L649.25 378.86 L647.69 379.27 L646.11 379.67 L644.50 380.07 L642.87 380.46 L641.22 380.84 L639.54 381.21 L637.84 381.58 L636.12 381.94 L634.38 382.30 L632.62 382.64 L630.84 382.98 L629.05 383.31 L627.23 383.63 L625.40 383.94 L623.56 384.25 L621.69 384.54 L619.82 384.83 L617.93 385.11 L616.03 385.38 L614.11 385.64 L612.19 385.89 L610.25 386.14 L608.31 386.37 L606.36 386.59 L604.40 386.81 L602.44 387.01 L600.47 387.21 L598.49 387.40 L596.52 387.57 L594.54 387.74 L592.57 387.90 L590.59 388.05 L588.62 388.18 L586.65 388.31 L584.69 388.43 L582.73 388.54 L580.79 388.63 L578.85 388.72 L576.93 388.80 L575.03 388.86 L573.15 388.92 L571.30 388.97 L569.49 389.00 L567.72 389.03 L566.02 389.04 L564.50 389.05 L562.98 389.04 L561.28 389.03 L559.51 389.00 L557.70 388.97 L555.85 388.92 L553.97 388.86 L552.07 388.80 L550.15 388.72 L548.21 388.63 L546.27 388.54 L544.31 388.43 L542.35 388.31 L540.38 388.18 L538.41 388.05 L536.43 387.90 L534.46 387.74 L532.48 387.57 L530.51 387.40 L528.53 387.21 L526.56 387.01 L524.60 386.81 L522.64 386.59 L520.69 386.37 L518.75 386.14 L516.81 385.89 L514.89 385.64 L512.97 385.38 L511.07 385.11 L509.18 384.83 L507.31 384.54 L505.44 384.25 L503.60 383.94 L501.77 383.63 L499.95 383.31 L498.16 382.98 L496.38 382.64 L494.62 382.30 L492.88 381.94 L491.16 381.58 L489.46 381.21 L487.78 380.84 L486.13 380.46 L484.50 380.07 L482.89 379.67 L481.31 379.27 L479.75 378.86 L478.22 378.44 L476.72 378.02 L475.24 377.59 L473.79 377.16 L472.37 376.72 L470.97 376.28 L469.61 375.83 L468.28 375.37 L466.97 374.91 L465.70 374.45 L464.46 373.98 L463.25 373.50 L462.07 373.03 L460.93 372.54 L459.81 372.06 L458.74 371.57 L457.69 371.08 L456.68 370.58 L455.71 370.09 L454.77 369.59 L453.86 369.08 L453.00 368.58 L452.16 368.07 L451.37 367.56 L450.61 367.05 L449.89 366.54 L449.21 366.03 L448.56 365.52 L447.95 365.01 L447.38 364.50 L446.85 363.99 L446.36 363.48 L445.90 362.97 L445.49 362.47 L445.11 361.96 L444.77 361.46 L444.47 360.97 L444.22 360.47 L444.00 359.99 L443.82 359.51 L443.68 359.04 L443.58 358.58 L443.52 358.14 L443.50 357.75 L443.52 357.36 L443.58 356.92 L443.68 356.46 L443.82 355.99 L444.00 355.51 L444.22 355.03 L444.47 354.53 L444.77 354.04 L445.11 353.54 L445.49 353.03 L445.90 352.53 L446.36 352.02 L446.85 351.51 L447.38 351.00 L447.95 350.49 L448.56 349.98 L449.21 349.47 L449.89 348.96 L450.61 348.45 L451.37 347.94 L452.16 347.43 L453.00 346.92 L453.86 346.42 L454.77 345.91 L455.71 345.41 L456.68 344.92 L457.69 344.42 L458.74 343.93 L459.81 343.44 L460.93 342.96 L462.07 342.47 L463.25 342.00 L464.46 341.52 L465.70 341.05 L466.97 340.59 L468.28 340.13 L469.61 339.67 L470.97 339.22 L472.37 338.78 L473.79 338.34 L475.24 337.91 L476.72 337.48 L478.22 337.06 L479.75 336.64 L481.31 336.23 L482.89 335.83 L484.50 335.43 L486.13 335.04 L487.78 334.66 L489.46 334.29 L491.16 333.92 L492.88 333.56 L494.62 333.20 L496.38 332.86 L498.16 332.52 L499.95 332.19 L501.77 331.87 L503.60 331.56 L505.44 331.25 L507.31 330.96 L509.18 330.67 L511.07 330.39 L512.97 330.12 L514.89 329.86 L516.81 329.61 L518.75 329.36 L520.69 329.13 L522.64 328.91 L524.60 328.69 L526.56 328.49 L528.53 328.29 L530.51 328.10 L532.48 327.93 L534.46 327.76 L536.43 327.60 L538.41 327.45 L540.38 327.32 L542.35 327.19 L544.31 327.07 L546.27 326.96 L548.21 326.87 L550.15 326.78 L552.07 326.70 L553.97 326.64 L555.85 326.58 L557.70 326.53 L559.51 326.50 L561.28 326.47 L562.98 326.46 L564.50 326.45 L566.02 326.46 L567.72 326.47 L569.49 326.50 L571.30 326.53 L573.15 326.58 L575.03 326.64 L576.93 326.70 L578.85 326.78 L580.79 326.87 L582.73 326.96 L584.69 327.07 L586.65 327.19 L588.62 327.32 L590.59 327.45 L592.57 327.60 L594.54 327.76 L596.52 327.93 L598.49 328.10 L600.47 328.29 L602.44 328.49 L604.40 328.69 L606.36 328.91 L608.31 329.13 L610.25 329.36 L612.19 329.61 L614.11 329.86 L616.03 330.12 L617.93 330.39 L619.82 330.67 L621.69 330.96 L623.56 331.25 L625.40 331.56 L627.23 331.87 L629.05 332.19 L630.84 332.52 L632.62 332.86 L634.38 333.20 L636.12 333.56 L637.84 333.92 L639.54 334.29 L641.22 334.66 L642.87 335.04 L644.50 335.43 L646.11 335.83 L647.69 336.23 L649.25 336.64 L650.78 337.06 L652.28 337.48 L653.76 337.91 L655.21 338.34 L656.63 338.78 L658.03 339.22 L659.39 339.67 L660.72 340.13 L662.03 340.59 L663.30 341.05 L664.54 341.52 L665.75 342.00 L666.93 342.47 L668.07 342.96 L669.19 343.44 L670.26 343.93 L671.31 344.42 L672.32 344.92 L673.29 345.41 L674.23 345.91 L675.14 346.42 L676.00 346.92 L676.84 347.43 L677.63 347.94 L678.39 348.45 L679.11 348.96 L679.79 349.47 L680.44 349.98 L681.05 350.49 L681.62 351.00 L682.15 351.51 L682.64 352.02 L683.10 352.53 L683.51 353.03 L683.89 353.54 L684.23 354.04 L684.53 354.53 L684.78 355.03 L685.00 355.51 L685.18 355.99 L685.32 356.46 L685.42 356.92 L685.48 357.36 Z" fill="none" stroke="#e81c24" stroke-width="4.7" shape-rendering="crispEdges"/></svg>
</body></html>
